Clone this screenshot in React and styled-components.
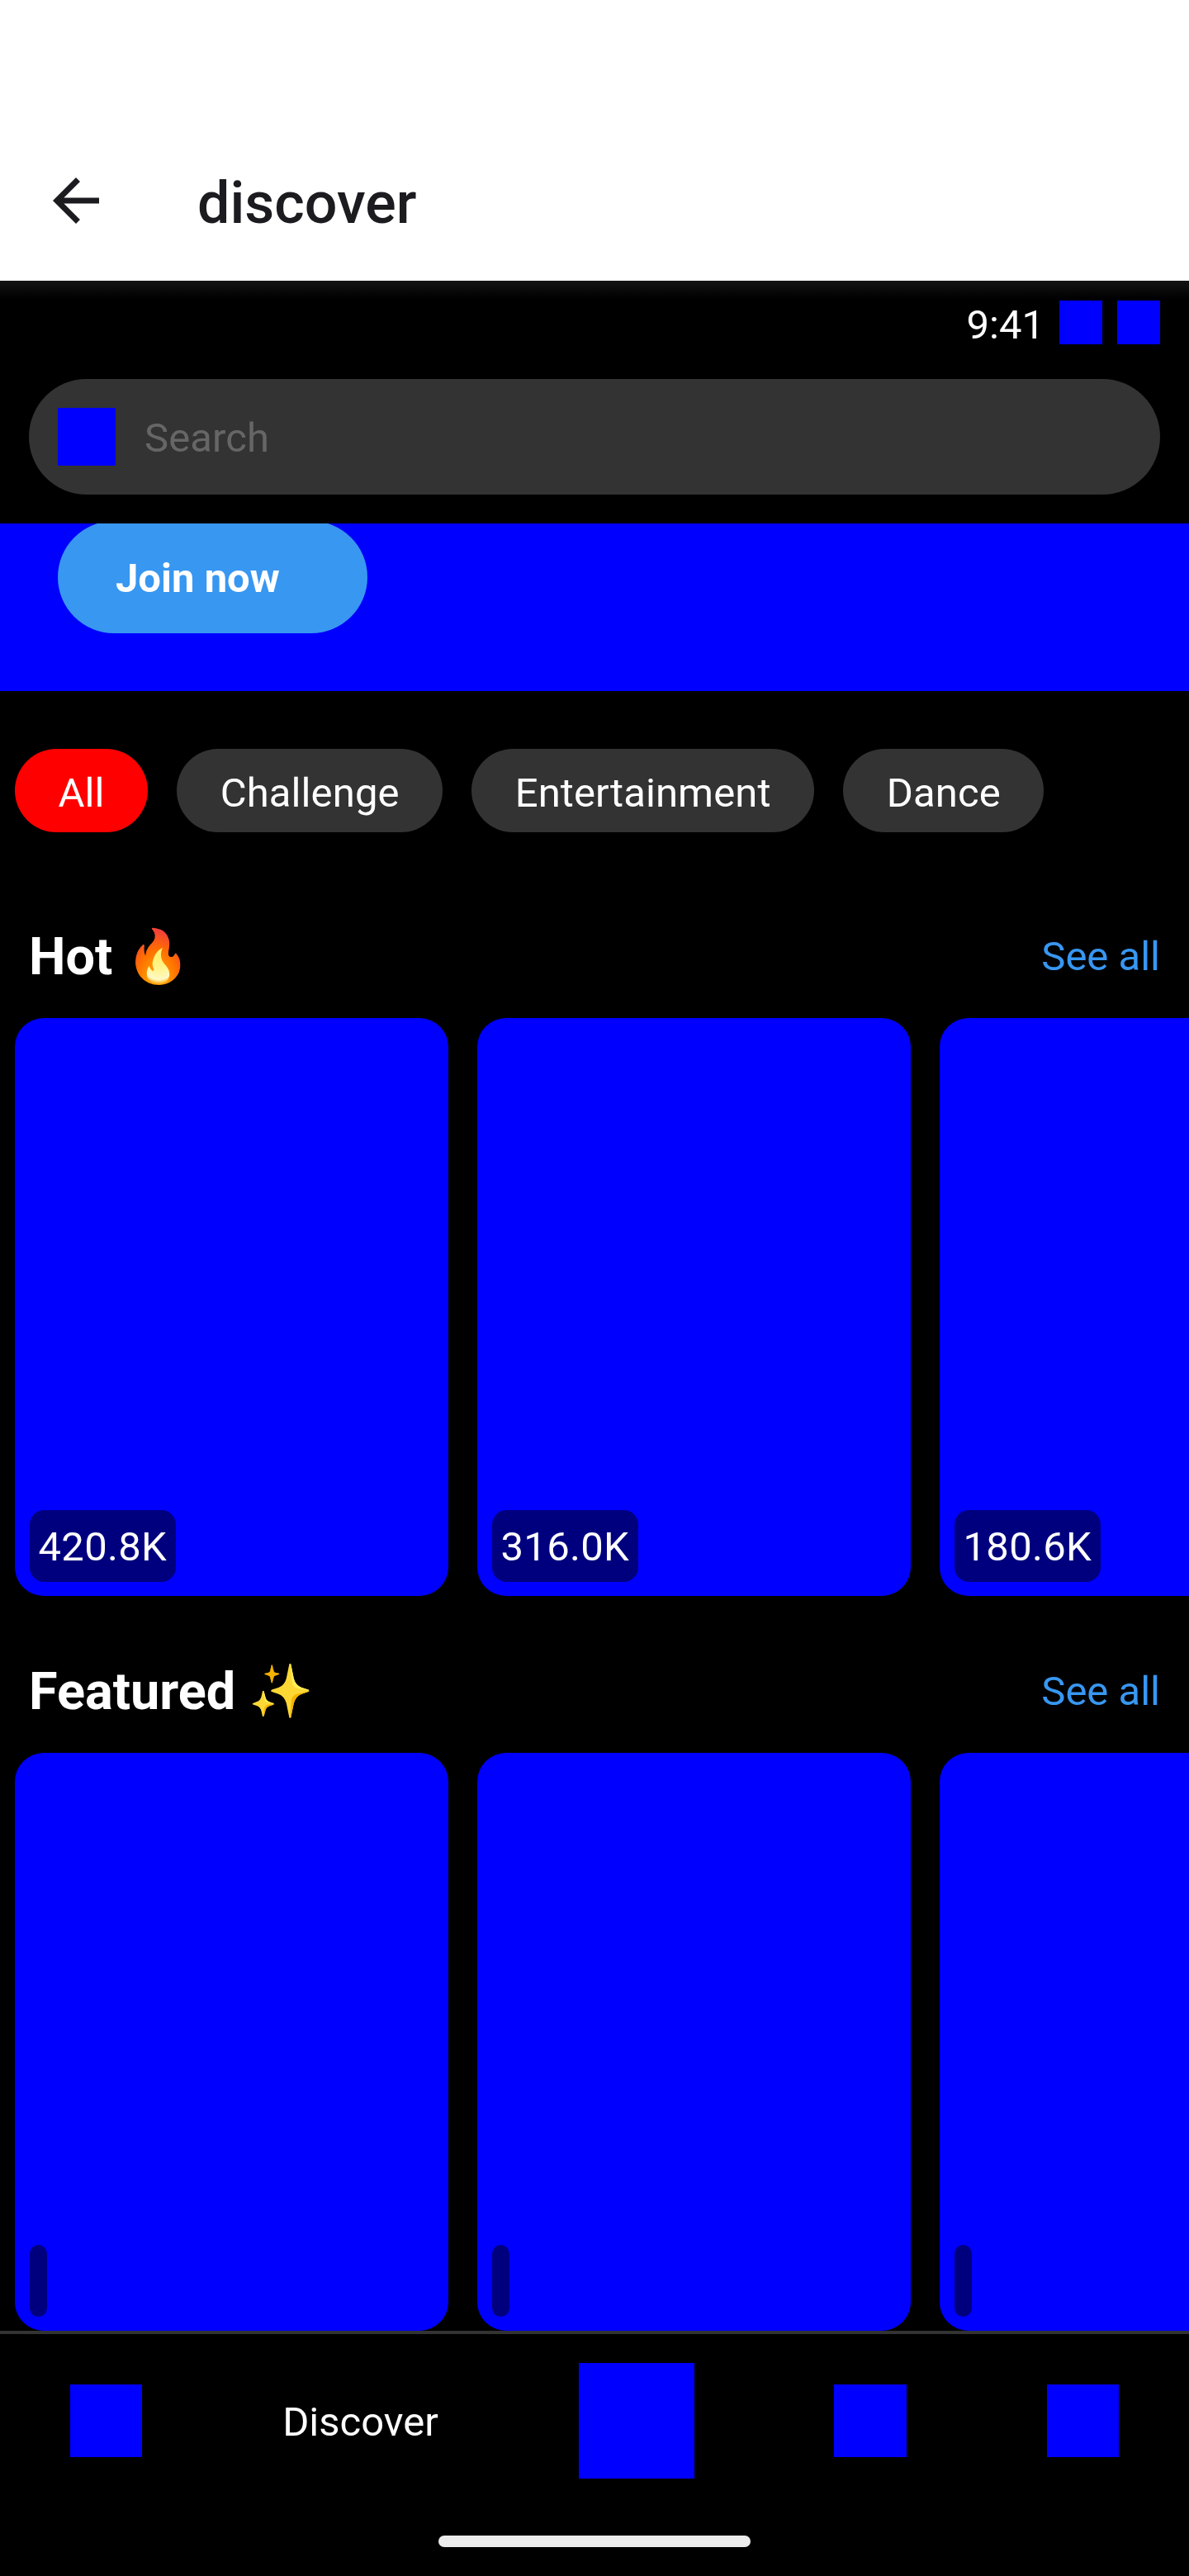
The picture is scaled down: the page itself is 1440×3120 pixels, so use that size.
import React from "react";
import styled, { createGlobalStyle } from "styled-components";

const GlobalStyle = createGlobalStyle`
  *, *::before, *::after { box-sizing: border-box; }
  html, body { margin: 0; padding: 0; background: #000; }
  body { font-family: Roboto, "Noto Color Emoji", sans-serif; font-size: 49px; line-height: 58px; color: #fff; }
  button { font: inherit; color: inherit; border: 0; margin: 0; cursor: pointer; }
`;

const Screen = styled.div`
  display: flex;
  flex-direction: column;
  width: 1440px;
  height: 3120px;
  overflow: hidden;
  background: #000;
`;

const TitleBar = styled.header`
  display: flex;
  align-items: center;
  flex: none;
  height: 340px;
  padding: 146px 50px 0;
  background: #fff;
`;

const BackButton = styled.button`
  display: flex;
  padding: 0;
  background: none;
  color: #1c1b1f;
`;

const Title = styled.h1`
  margin: 0 0 0 105px;
  padding-top: 6px;
  font-size: 70px;
  line-height: 82px;
  font-weight: 500;
  color: #1c1b1f;
`;

const StatusBar = styled.div`
  display: flex;
  justify-content: flex-end;
  align-items: flex-start;
  gap: 18px;
  flex: none;
  height: 119px;
  padding: 24px 35px 0;
  background: linear-gradient(#131313, #000 22px);
`;

const Clock = styled.span`
  padding-top: 1px;
`;

const Block = styled.div`
  flex: none;
  width: ${(p) => p.$w}px;
  height: ${(p) => p.$h ?? p.$w}px;
  background: #00f;
`;

const SearchField = styled.div`
  display: flex;
  align-items: center;
  gap: 35px;
  flex: none;
  height: 140px;
  margin: 0 35px 35px;
  padding: 0 35px;
  border-radius: 70px;
  background: #333;
`;

const Placeholder = styled.span`
  padding-top: 4px;
  letter-spacing: 0.1px;
  color: #666;
`;

const Banner = styled.section`
  flex: none;
  height: 203px;
  padding-left: 70px;
  overflow: hidden;
  background: #00f;
`;

const JoinButton = styled.button`
  display: block;
  width: 375px;
  height: 136px;
  margin-top: -3px;
  padding: 4px 70px 0;
  border-radius: 68px;
  background: #3897f1;
  font-weight: 700;
  text-align: left;
`;

const Chips = styled.div`
  display: flex;
  gap: 35px;
  flex: none;
  padding: 70px 18px 75px;
`;

const Chip = styled.button`
  height: 101px;
  padding: 6px 52.5px 0;
  border-radius: 50.5px;
  letter-spacing: 0.12px;
  background: ${(p) => (p.$active ? "#f00" : "#333")};
`;

const Section = styled.section`
  flex: none;
  margin-bottom: ${(p) => (p.$last ? 0 : 40)}px;
`;

const SectionHead = styled.div`
  display: flex;
  justify-content: space-between;
  align-items: center;
  height: 150px;
  padding: 0 35px;
`;

const SectionTitle = styled.h2`
  margin: 0;
  padding-top: 1px;
  font-size: 63px;
  line-height: 74px;
  font-weight: 700;
`;

const SeeAll = styled.a`
  padding-top: 1px;
  color: #3897f1;
`;

const Reel = styled.div`
  display: flex;
  gap: 35px;
  padding-left: 18px;
  overflow: hidden;
`;

const Card = styled.article`
  display: flex;
  align-items: flex-end;
  flex: none;
  width: 525px;
  height: 700px;
  padding: 17px 18px;
  border-radius: 35px;
  background: #00f;
`;

const Views = styled.span`
  height: 87px;
  padding: 16px 10.5px 0;
  border-radius: 17.5px;
  letter-spacing: 0.3px;
  background: rgba(0, 0, 0, 0.5);
`;

const BottomBar = styled.footer`
  flex: none;
  height: 297px;
  border-top: 4px solid #333;
`;

const Tabs = styled.nav`
  display: flex;
  justify-content: space-around;
  align-items: center;
  padding-top: 35px;
`;

const TabLabel = styled.span`
  padding-top: 4px;
`;

const HomeIndicator = styled.div`
  width: 378px;
  height: 14px;
  margin: 69px auto 0;
  border-radius: 7px;
  background: #ececec;
`;

const chips = ["All", "Challenge", "Entertainment", "Dance"];

const sections = [
  { title: "Hot 🔥", views: ["420.8K", "316.0K", "180.6K"] },
  { title: "Featured ✨", views: ["", "", ""] },
];

function ArrowBack() {
  return (
    <svg width="84" height="84" viewBox="0 0 24 24" fill="currentColor" aria-hidden="true">
      <path d="M20 11H7.83l5.59-5.59L12 4l-8 8 8 8 1.41-1.41L7.83 13H20v-2z" />
    </svg>
  );
}

export default function App() {
  return (
    <>
      <GlobalStyle />
      <Screen>
        <TitleBar>
          <BackButton aria-label="Back">
            <ArrowBack />
          </BackButton>
          <Title>discover</Title>
        </TitleBar>
        <StatusBar>
          <Clock>9:41</Clock>
          <Block $w={52} $h={53} />
          <Block $w={52} $h={53} />
        </StatusBar>
        <SearchField>
          <Block $w={70} />
          <Placeholder>Search</Placeholder>
        </SearchField>
        <Banner>
          <JoinButton>Join now</JoinButton>
        </Banner>
        <Chips>
          {chips.map((label, i) => (
            <Chip key={label} $active={i === 0}>
              {label}
            </Chip>
          ))}
        </Chips>
        {sections.map((section, i) => (
          <Section key={section.title} $last={i === sections.length - 1}>
            <SectionHead>
              <SectionTitle>{section.title}</SectionTitle>
              <SeeAll>See all</SeeAll>
            </SectionHead>
            <Reel>
              {section.views.map((count, n) => (
                <Card key={n}>
                  <Views>{count}</Views>
                </Card>
              ))}
            </Reel>
          </Section>
        ))}
        <BottomBar>
          <Tabs>
            <Block $w={87.5} />
            <TabLabel>Discover</TabLabel>
            <Block $w={140} />
            <Block $w={87.5} />
            <Block $w={87.5} />
          </Tabs>
          <HomeIndicator />
        </BottomBar>
      </Screen>
    </>
  );
}
